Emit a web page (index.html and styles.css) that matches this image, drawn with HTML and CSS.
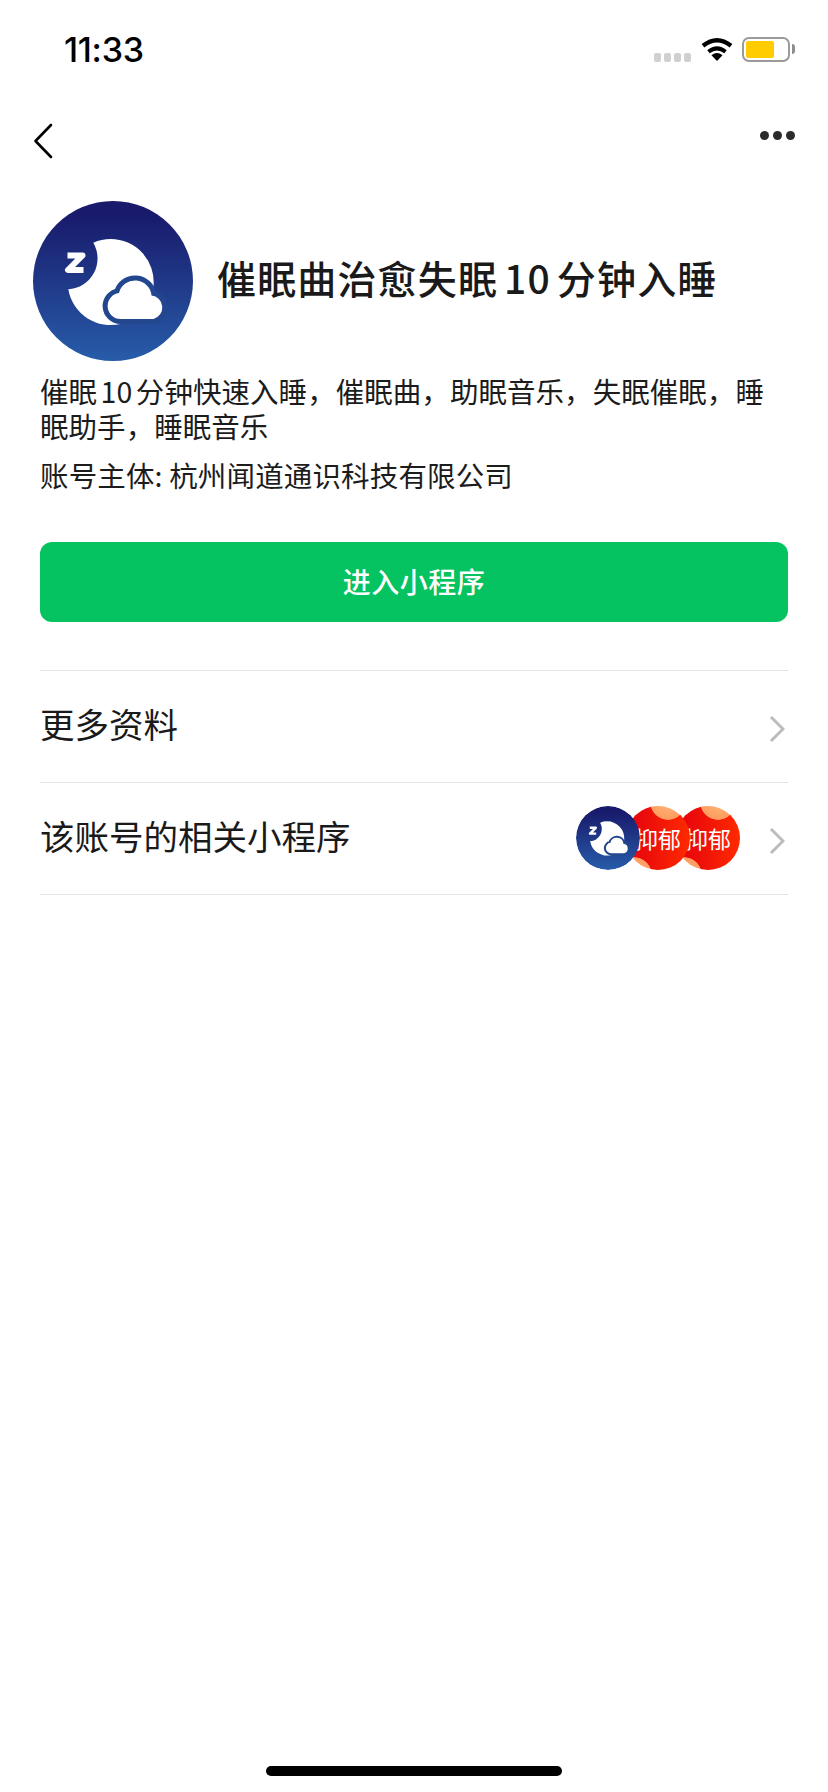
FILE: index.html
```html
<!DOCTYPE html>
<html lang="zh-CN">
<head>
<meta charset="utf-8">
<title>催眠曲治愈失眠10分钟入睡</title>
<link rel="stylesheet" href="styles.css">
</head>
<body>
<svg class="defs" width="0" height="0" aria-hidden="true">
  <defs>
    <linearGradient id="sky" x1="0" y1="0" x2="0" y2="1">
      <stop offset="0.08" stop-color="#191a6b"/>
      <stop offset="1" stop-color="#275ca9"/>
    </linearGradient>
    <symbol id="logo" viewBox="0 0 160 160">
      <circle cx="80" cy="80" r="80" fill="url(#sky)"/>
      <path d="M60.3 41.7A43 43 0 1 1 35.3 88.3A31 31 0 0 0 60.3 41.7Z" fill="#fff"/>
      <path d="M87.500 118a13 13 0 0 1-1.500-25.900A16.500 16.500 0 0 1 118.500 94.500A12 12 0 0 1 120.500 118Z" fill="#fff" stroke="#23478f" stroke-width="10" paint-order="stroke" stroke-linejoin="round"/>
      <path d="M34.500 54.500H49.500L35 69H50.500" fill="none" stroke="#fff" stroke-width="6" stroke-linejoin="round"/>
    </symbol>
  </defs>
</svg>
<div class="phone">
  <header class="status">
    <span class="time">11:33</span>
    <div class="status-icons">
      <div class="signal"><i></i><i></i><i></i><i></i></div>
      <svg class="wifi" viewBox="0 0 32 24" width="32" height="24">
        <path d="M16 24L10.500 18.200Q16 13.800 21.500 18.200Z" fill="#000"/>
        <path d="M7.500 14.800Q16 8 24.500 14.800" fill="none" stroke="#000" stroke-width="4"/>
        <path d="M2 8.800Q16 -2.400 30 8.800" fill="none" stroke="#000" stroke-width="4.400"/>
      </svg>
      <div class="battery"><div class="battery-fill"></div></div>
      <div class="battery-nub"></div>
    </div>
  </header>
  <nav class="nav">
    <svg class="back" viewBox="0 0 20 36" width="20" height="36">
      <path d="M18 2L2.500 18L18 34" fill="none" stroke="#000" stroke-width="2.600" stroke-linecap="round" stroke-linejoin="round"/>
    </svg>
    <div class="more"><i></i><i></i><i></i></div>
  </nav>
  <main class="content">
    <section class="profile">
      <svg class="avatar" width="160" height="160"><use href="#logo"/></svg>
      <h1 class="title">催眠曲治愈失眠<span class="num-lg">10</span>分钟入睡</h1>
    </section>
    <p class="desc">催眠<span class="num">10</span>分钟快速入睡，催眠曲，助眠音乐，失眠催眠，睡眠助手，睡眠音乐</p>
    <p class="owner">账号主体: 杭州闻道通识科技有限公司</p>
    <button class="enter">进入小程序</button>
    <ul class="list">
      <li class="row">
        <span class="label">更多资料</span>
        <svg class="chev" viewBox="0 0 16 28" width="16" height="28"><path d="M2 2L14 14L2 26" fill="none" stroke="#bcbcbc" stroke-width="3"/></svg>
      </li>
      <li class="row">
        <span class="label">该账号的相关小程序</span>
        <div class="minis">
          <svg class="mini mini-a" width="64" height="64"><use href="#logo"/></svg>
          <div class="mini mini-red mini-b">抑郁</div>
          <div class="mini mini-red mini-c">抑郁</div>
        </div>
        <svg class="chev" viewBox="0 0 16 28" width="16" height="28"><path d="M2 2L14 14L2 26" fill="none" stroke="#bcbcbc" stroke-width="3"/></svg>
      </li>
    </ul>
  </main>
  <div class="home-bar"></div>
</div>
</body>
</html>
```
FILE: styles.css
```css
* { box-sizing: border-box; }
html, body { margin: 0; padding: 0; background: #fff; }
body { font-family: "Noto Sans CJK SC", "Noto Sans", sans-serif; color: #1a1a1a; }
.defs { position: absolute; }
.phone { position: relative; width: 828px; height: 1792px; overflow: hidden; background: #fff; display: flex; flex-direction: column; }

.status { height: 88px; display: flex; justify-content: space-between; padding: 30px 33px 0 64px; }
.time { font-family: Inter, "Liberation Sans", sans-serif; font-weight: 500; font-size: 34px; line-height: 40px; height: 40px; color: #000; letter-spacing: -0.3px; }
.status-icons { display: flex; align-items: flex-start; padding-top: 7px; }
.signal { display: flex; gap: 3px; margin-top: 16px; margin-right: 10px; }
.signal i { width: 7px; height: 9px; border-radius: 2px; background: #d0d0d0; }
.wifi { margin-right: 9px; }
.battery { width: 48px; height: 25px; border: 2px solid #9a9a9a; border-radius: 7px; padding: 2px; }
.battery-fill { width: 28px; height: 17px; border-radius: 2px; background: #ffcc00; }
.battery-nub { width: 3px; height: 10px; margin: 7px 0 0 2px; border-radius: 0 3px 3px 0; background: #8e8e8e; }

.nav { height: 113px; display: flex; justify-content: space-between; align-items: flex-start; padding: 35px 33px 0 33px; }
.more { display: flex; gap: 4px; margin-top: 8px; }
.more i { width: 9px; height: 9px; border-radius: 50%; background: #2b2b2b; }

.content { padding: 0 40px 0 40px; }
.profile { display: flex; align-items: center; gap: 24px; margin-left: -7px; }
.avatar { display: block; flex: none; }
.title { margin: 0 0 9px; font-size: 39px; line-height: 54px; font-weight: 500; letter-spacing: 1.15px; color: #1a1a1a; }
.num-lg { margin: 0 6px; }
.num { margin: 0 3.5px; }
.desc { margin: 12px 0 0; font-size: 28.5px; line-height: 35px; letter-spacing: 0.05px; color: #1c1c1c; }
.owner { margin: 14px 0 0; font-size: 28.5px; line-height: 35px; letter-spacing: 0.15px; color: #1c1c1c; }
.enter { display: block; width: 748px; height: 80px; margin: 50px 0 48px; padding: 0 0 2px; border: 0; border-radius: 12px; background: #04c360; color: #fff; font-family: inherit; font-size: 28px; font-weight: 500; letter-spacing: 0.5px; }

.list { margin: 0; padding: 0; list-style: none; border-top: 1px solid #e3e3e3; }
.row { height: 112px; display: flex; align-items: center; border-bottom: 1px solid #e3e3e3; }
.label { font-size: 34.5px; line-height: 48px; color: #1a1a1a; flex: 1; padding-bottom: 7px; }
.chev { flex: none; margin: 5px 3px 0 0; }
.minis { display: flex; margin: 0 29px 2px 0; }
.mini { display: block; flex: none; width: 64px; height: 64px; border-radius: 50%; }
.mini + .mini { margin-left: -14px; }
.mini-a { position: relative; z-index: 3; }
.mini-b { position: relative; z-index: 2; }
.mini-c { position: relative; z-index: 1; }
.mini-red {
  display: flex; align-items: center; justify-content: center; overflow: hidden; white-space: nowrap;
  font-size: 23px; color: #fff;
  background:
    radial-gradient(circle 18px at 42px -4px, #ffb678 0, #ff9c60 97%, transparent 100%),
    radial-gradient(circle 18px at 8px 69px, #ffb678 0, #ff9c60 97%, transparent 100%),
    linear-gradient(90deg, #e4000f, #ff2a00);
}

.home-bar { position: absolute; left: 266px; bottom: 16px; width: 296px; height: 10px; border-radius: 5px; background: #000; }
```
